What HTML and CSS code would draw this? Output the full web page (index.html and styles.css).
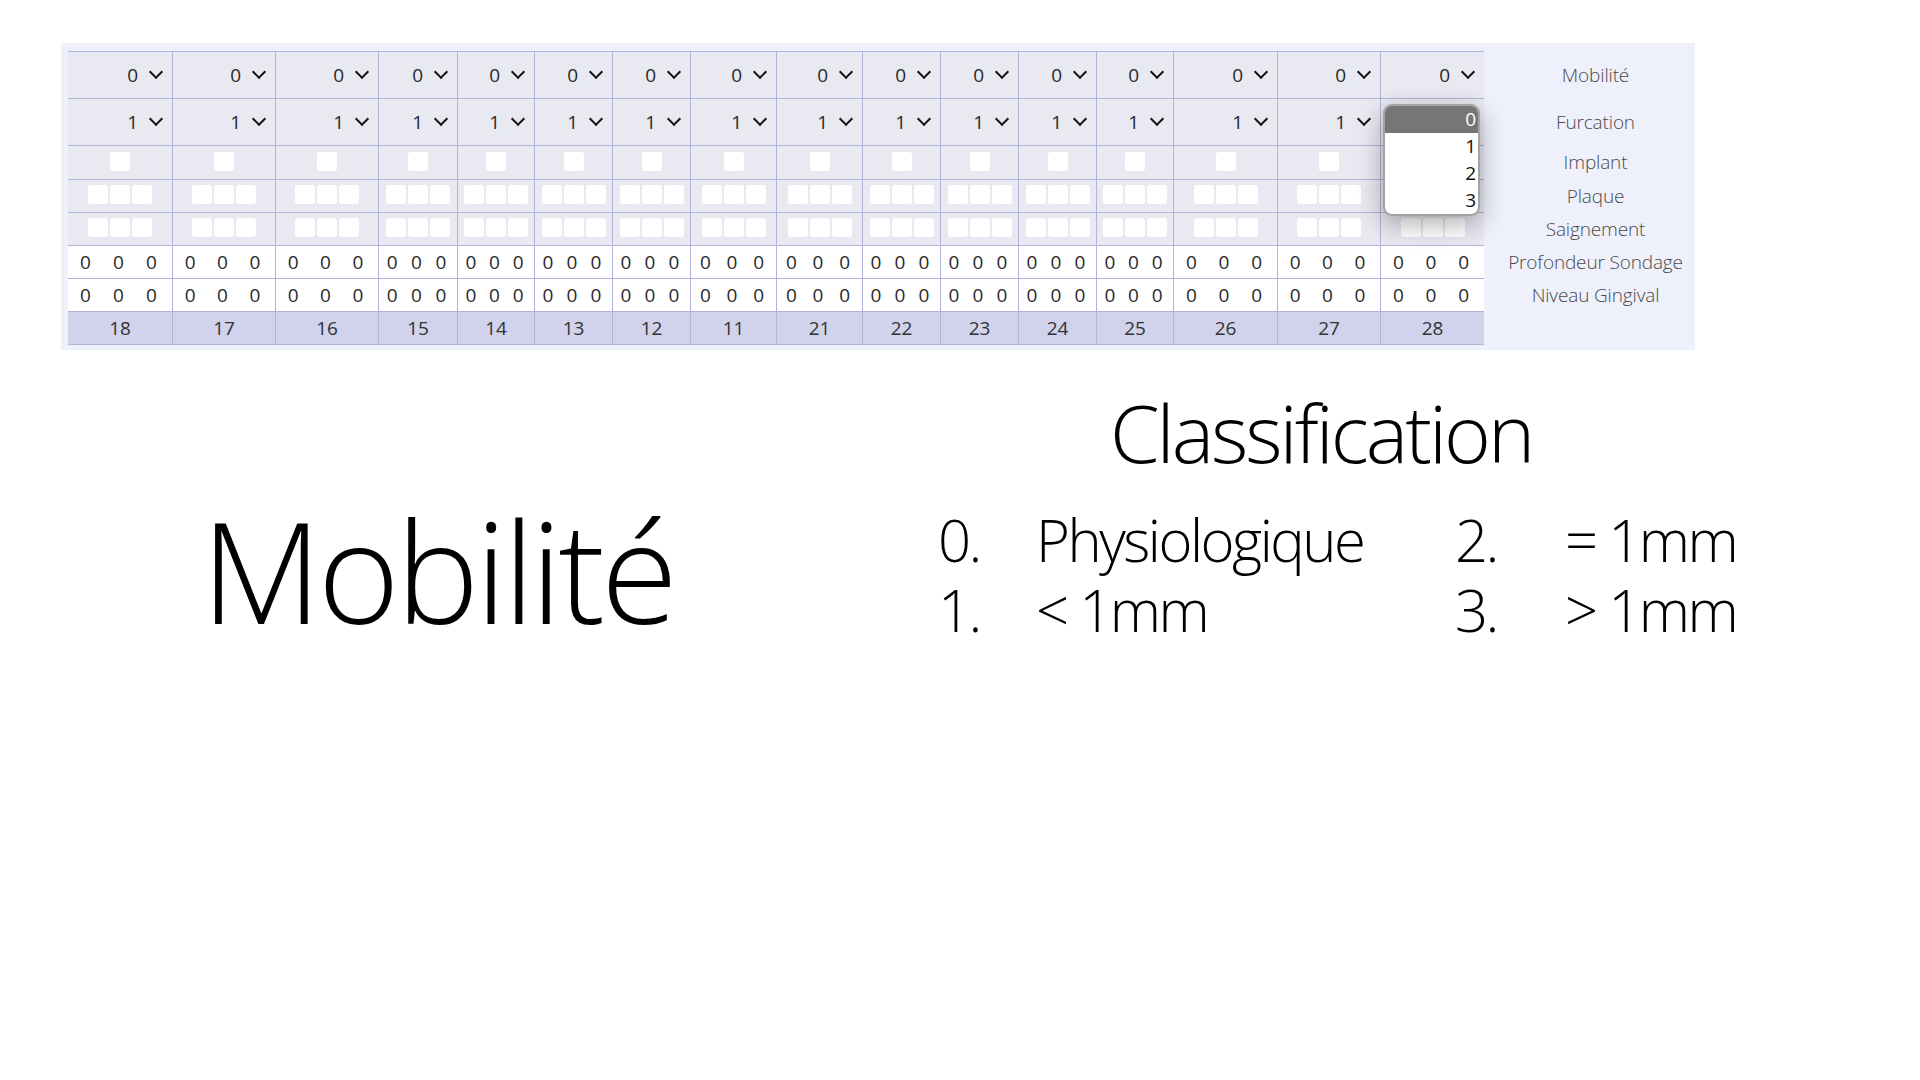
FILE: index.html
```html
<!DOCTYPE html>
<html lang="fr">
<head>
<meta charset="utf-8">
<title>Mobilité</title>
<link rel="stylesheet" href="styles.css">
</head>
<body>
<section class="chart">
  <div class="grid">
    <!-- Row 1: Mobilité -->
    <div class="c sel"><span>0</span></div><div class="c sel"><span>0</span></div><div class="c sel"><span>0</span></div><div class="c sel"><span>0</span></div>
    <div class="c sel"><span>0</span></div><div class="c sel"><span>0</span></div><div class="c sel"><span>0</span></div><div class="c sel"><span>0</span></div>
    <div class="c sel"><span>0</span></div><div class="c sel"><span>0</span></div><div class="c sel"><span>0</span></div><div class="c sel"><span>0</span></div>
    <div class="c sel"><span>0</span></div><div class="c sel"><span>0</span></div><div class="c sel"><span>0</span></div><div class="c sel"><span>0</span></div>
    <!-- Row 2: Furcation -->
    <div class="c sel"><span>1</span></div><div class="c sel"><span>1</span></div><div class="c sel"><span>1</span></div><div class="c sel"><span>1</span></div>
    <div class="c sel"><span>1</span></div><div class="c sel"><span>1</span></div><div class="c sel"><span>1</span></div><div class="c sel"><span>1</span></div>
    <div class="c sel"><span>1</span></div><div class="c sel"><span>1</span></div><div class="c sel"><span>1</span></div><div class="c sel"><span>1</span></div>
    <div class="c sel"><span>1</span></div><div class="c sel"><span>1</span></div><div class="c sel"><span>1</span></div><div class="c sel"><span>0</span></div>
    <!-- Row 3: Implant -->
    <div class="c chk"><i class="box"></i></div><div class="c chk"><i class="box"></i></div><div class="c chk"><i class="box"></i></div><div class="c chk"><i class="box"></i></div>
    <div class="c chk"><i class="box"></i></div><div class="c chk"><i class="box"></i></div><div class="c chk"><i class="box"></i></div><div class="c chk"><i class="box"></i></div>
    <div class="c chk"><i class="box"></i></div><div class="c chk"><i class="box"></i></div><div class="c chk"><i class="box"></i></div><div class="c chk"><i class="box"></i></div>
    <div class="c chk"><i class="box"></i></div><div class="c chk"><i class="box"></i></div><div class="c chk"><i class="box"></i></div><div class="c chk"><i class="box"></i></div>
    <!-- Row 4: Plaque -->
    <div class="c chk"><i class="box"></i><i class="box"></i><i class="box"></i></div><div class="c chk"><i class="box"></i><i class="box"></i><i class="box"></i></div>
    <div class="c chk"><i class="box"></i><i class="box"></i><i class="box"></i></div><div class="c chk"><i class="box"></i><i class="box"></i><i class="box"></i></div>
    <div class="c chk"><i class="box"></i><i class="box"></i><i class="box"></i></div><div class="c chk"><i class="box"></i><i class="box"></i><i class="box"></i></div>
    <div class="c chk"><i class="box"></i><i class="box"></i><i class="box"></i></div><div class="c chk"><i class="box"></i><i class="box"></i><i class="box"></i></div>
    <div class="c chk"><i class="box"></i><i class="box"></i><i class="box"></i></div><div class="c chk"><i class="box"></i><i class="box"></i><i class="box"></i></div>
    <div class="c chk"><i class="box"></i><i class="box"></i><i class="box"></i></div><div class="c chk"><i class="box"></i><i class="box"></i><i class="box"></i></div>
    <div class="c chk"><i class="box"></i><i class="box"></i><i class="box"></i></div><div class="c chk"><i class="box"></i><i class="box"></i><i class="box"></i></div>
    <div class="c chk"><i class="box"></i><i class="box"></i><i class="box"></i></div><div class="c chk"><i class="box"></i><i class="box"></i><i class="box"></i></div>
    <!-- Row 5: Saignement -->
    <div class="c chk"><i class="box"></i><i class="box"></i><i class="box"></i></div><div class="c chk"><i class="box"></i><i class="box"></i><i class="box"></i></div>
    <div class="c chk"><i class="box"></i><i class="box"></i><i class="box"></i></div><div class="c chk"><i class="box"></i><i class="box"></i><i class="box"></i></div>
    <div class="c chk"><i class="box"></i><i class="box"></i><i class="box"></i></div><div class="c chk"><i class="box"></i><i class="box"></i><i class="box"></i></div>
    <div class="c chk"><i class="box"></i><i class="box"></i><i class="box"></i></div><div class="c chk"><i class="box"></i><i class="box"></i><i class="box"></i></div>
    <div class="c chk"><i class="box"></i><i class="box"></i><i class="box"></i></div><div class="c chk"><i class="box"></i><i class="box"></i><i class="box"></i></div>
    <div class="c chk"><i class="box"></i><i class="box"></i><i class="box"></i></div><div class="c chk"><i class="box"></i><i class="box"></i><i class="box"></i></div>
    <div class="c chk"><i class="box"></i><i class="box"></i><i class="box"></i></div><div class="c chk"><i class="box"></i><i class="box"></i><i class="box"></i></div>
    <div class="c chk"><i class="box"></i><i class="box"></i><i class="box"></i></div><div class="c chk"><i class="box"></i><i class="box"></i><i class="box"></i></div>
    <!-- Row 6: Profondeur Sondage -->
    <div class="c nums"><span>0</span><span>0</span><span>0</span></div><div class="c nums"><span>0</span><span>0</span><span>0</span></div>
    <div class="c nums"><span>0</span><span>0</span><span>0</span></div><div class="c nums"><span>0</span><span>0</span><span>0</span></div>
    <div class="c nums"><span>0</span><span>0</span><span>0</span></div><div class="c nums"><span>0</span><span>0</span><span>0</span></div>
    <div class="c nums"><span>0</span><span>0</span><span>0</span></div><div class="c nums"><span>0</span><span>0</span><span>0</span></div>
    <div class="c nums"><span>0</span><span>0</span><span>0</span></div><div class="c nums"><span>0</span><span>0</span><span>0</span></div>
    <div class="c nums"><span>0</span><span>0</span><span>0</span></div><div class="c nums"><span>0</span><span>0</span><span>0</span></div>
    <div class="c nums"><span>0</span><span>0</span><span>0</span></div><div class="c nums"><span>0</span><span>0</span><span>0</span></div>
    <div class="c nums"><span>0</span><span>0</span><span>0</span></div><div class="c nums"><span>0</span><span>0</span><span>0</span></div>
    <!-- Row 7: Niveau Gingival -->
    <div class="c nums"><span>0</span><span>0</span><span>0</span></div><div class="c nums"><span>0</span><span>0</span><span>0</span></div>
    <div class="c nums"><span>0</span><span>0</span><span>0</span></div><div class="c nums"><span>0</span><span>0</span><span>0</span></div>
    <div class="c nums"><span>0</span><span>0</span><span>0</span></div><div class="c nums"><span>0</span><span>0</span><span>0</span></div>
    <div class="c nums"><span>0</span><span>0</span><span>0</span></div><div class="c nums"><span>0</span><span>0</span><span>0</span></div>
    <div class="c nums"><span>0</span><span>0</span><span>0</span></div><div class="c nums"><span>0</span><span>0</span><span>0</span></div>
    <div class="c nums"><span>0</span><span>0</span><span>0</span></div><div class="c nums"><span>0</span><span>0</span><span>0</span></div>
    <div class="c nums"><span>0</span><span>0</span><span>0</span></div><div class="c nums"><span>0</span><span>0</span><span>0</span></div>
    <div class="c nums"><span>0</span><span>0</span><span>0</span></div><div class="c nums"><span>0</span><span>0</span><span>0</span></div>
    <!-- Row 8: tooth numbers -->
    <div class="c tooth">18</div><div class="c tooth">17</div><div class="c tooth">16</div><div class="c tooth">15</div>
    <div class="c tooth">14</div><div class="c tooth">13</div><div class="c tooth">12</div><div class="c tooth">11</div>
    <div class="c tooth">21</div><div class="c tooth">22</div><div class="c tooth">23</div><div class="c tooth">24</div>
    <div class="c tooth">25</div><div class="c tooth">26</div><div class="c tooth">27</div><div class="c tooth">28</div>

    <ul class="popup">
      <li class="opt opt-active">0</li>
      <li class="opt">1</li>
      <li class="opt">2</li>
      <li class="opt">3</li>
    </ul>
  </div>
  <div class="labels">
    <div class="lab">Mobilité</div>
    <div class="lab">Furcation</div>
    <div class="lab">Implant</div>
    <div class="lab">Plaque</div>
    <div class="lab">Saignement</div>
    <div class="lab">Profondeur Sondage</div>
    <div class="lab">Niveau Gingival</div>
    <div class="lab"></div>
  </div>
</section>

<section class="lower">
  <div class="mob-panel">
    <h1 class="mob-title">Mobilité</h1>
  </div>
  <div class="class-panel">
    <h2 class="class-title">Classification</h2>
    <div class="class-list">
      <span>0.</span><span>Physiologique</span><span>2.</span><span>= 1mm</span>
      <span>1.</span><span>&lt; 1mm</span><span>3.</span><span>&gt; 1mm</span>
    </div>
  </div>
</section>
</body>
</html>
```

FILE: styles.css
```css
html, body {
  margin: 0;
  padding: 0;
  background: #ffffff;
}

body {
  font-family: "Open Sans", "Segoe UI", "Noto Sans", sans-serif;
  color: #222222;
}

/* ---------- Chart ---------- */
.chart {
  display: flex;
  box-sizing: border-box;
  width: 1634px;
  margin: 43px 0 0 61px;
  padding: 8px 0 5px 7px;
  background: #eef0fb;
}

.grid {
  position: relative;
  display: grid;
  grid-template-columns: 104px 103px 103px 79px 77px 78px 78px 86px 86px 78px 78px 78px 77px 104px 103px 104px;
  grid-template-rows: 47px 47px 34px 33px 33px 33px 33px 34px;
}

.c {
  box-sizing: border-box;
  border-top: 1px solid #b2b2da;
  border-left: 1px solid #b2b2da;
  background: #e8e9f1;
  font-size: 19px;
}

.c:nth-child(16n+1) {
  border-left: none;
}

/* select-like cells */
.sel {
  display: flex;
  align-items: center;
  justify-content: flex-end;
  gap: 13px;
  padding-right: 11px;
  color: #2a2a2a;
}

.sel::after {
  content: "";
  width: 8px;
  height: 8px;
  border-right: 2px solid #111111;
  border-bottom: 2px solid #111111;
  transform: translateY(-3px) rotate(45deg);
}

/* checkbox cells */
.chk {
  display: flex;
  align-items: center;
  justify-content: center;
  gap: 2px;
  padding-bottom: 3px;
}

.box {
  display: block;
  width: 20px;
  height: 19px;
  border-radius: 3px;
  background: #ffffff;
}

/* numeric rows */
.nums {
  display: flex;
  align-items: center;
  padding: 0 4px 0 1px;
  background: #ffffff;
  color: #2a2a2a;
}

.nums span {
  flex: 1;
  text-align: center;
}

/* tooth number row */
.tooth {
  display: flex;
  align-items: center;
  justify-content: center;
  background: #d1d2ec;
  border-bottom: 1px solid #b2b2da;
  color: #333333;
}

/* open dropdown */
.popup {
  position: absolute;
  left: 1315px;
  top: 53px;
  width: 97px;
  height: 112px;
  box-sizing: border-box;
  margin: 0;
  padding: 0;
  list-style: none;
  background: #ffffff;
  border: 2px solid #a3a3a3;
  border-radius: 9px;
  overflow: hidden;
  box-shadow: 0 8px 26px rgba(0, 0, 0, 0.32);
}

.opt {
  height: 27px;
  line-height: 27px;
  padding-right: 2px;
  text-align: right;
  font-size: 19px;
  color: #111111;
}

.opt-active {
  background: #767676;
  color: #ffffff;
}

/* row labels */
.labels {
  box-sizing: border-box;
  width: 211px;
  padding-left: 12px;
  display: grid;
  grid-template-rows: 47px 47px 34px 33px 33px 33px 33px 34px;
}

.lab {
  display: flex;
  align-items: center;
  justify-content: center;
  font-size: 19px;
  font-weight: 300;
  letter-spacing: -0.15px;
  color: #4a4a4a;
  white-space: nowrap;
}

/* ---------- Lower area ---------- */
.lower {
  display: flex;
  align-items: flex-start;
}

.mob-panel {
  width: 875px;
  padding-top: 136px;
  text-align: center;
}

.mob-title {
  margin: 0;
  font-size: 140px;
  line-height: 168px;
  font-weight: 300;
  letter-spacing: -4px;
  color: #000000;
}

.class-panel {
  width: 892px;
  padding-top: 34px;
}

.class-title {
  margin: 0;
  font-size: 80px;
  line-height: 96px;
  font-weight: 300;
  letter-spacing: -3px;
  text-align: center;
  color: #000000;
}

.class-list {
  display: grid;
  grid-template-columns: 98px 419px 110px auto;
  margin: 25px 0 0 63px;
  font-size: 58px;
  line-height: 70px;
  font-weight: 300;
  letter-spacing: -2.5px;
  color: #000000;
  white-space: nowrap;
}
```
